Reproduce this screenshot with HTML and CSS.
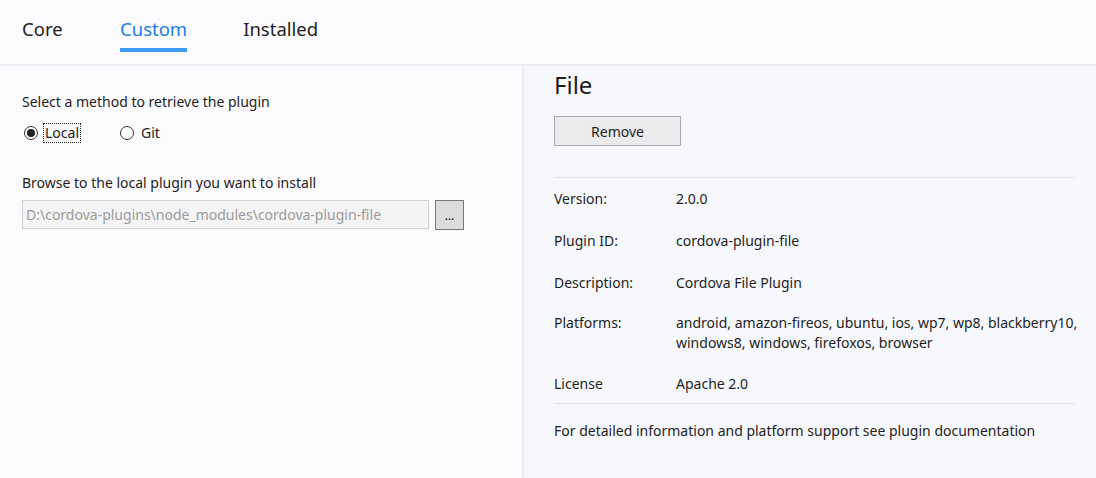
FILE: index.html
```html
<!DOCTYPE html>
<html>
<head>
<meta charset="utf-8">
<link rel="stylesheet" href="styles.css">
</head>
<body>
<div class="app">
  <nav class="tabs">
    <div class="tab t-core">Core</div>
    <div class="tab t-custom active">Custom</div>
    <div class="tab">Installed</div>
  </nav>
  <div class="main">
    <section class="left">
      <div class="label">Select a method to retrieve the plugin</div>
      <div class="radios">
        <label class="radio r-local"><span class="dot checked"></span><span class="rtext focus">Local</span></label>
        <label class="radio"><span class="dot"></span><span class="rtext">Git</span></label>
      </div>
      <div class="label browse">Browse to the local plugin you want to install</div>
      <div class="pathrow">
        <div class="path">D:\cordova-plugins\node_modules\cordova-plugin-file</div>
        <button class="dots">...</button>
      </div>
    </section>
    <section class="right">
      <h1 class="title">File</h1>
      <button class="remove">Remove</button>
      <div class="details">
        <div class="row"><div class="k">Version:</div><div class="v">2.0.0</div></div>
        <div class="row"><div class="k">Plugin ID:</div><div class="v">cordova-plugin-file</div></div>
        <div class="row"><div class="k">Description:</div><div class="v">Cordova File Plugin</div></div>
        <div class="row"><div class="k">Platforms:</div><div class="v">android, amazon-fireos, ubuntu, ios, wp7, wp8, blackberry10, windows8, windows, firefoxos, browser</div></div>
        <div class="row"><div class="k">License</div><div class="v">Apache 2.0</div></div>
      </div>
      <div class="foot">For detailed information and platform support see plugin documentation</div>
    </section>
  </div>
</div>
</body>
</html>
```
FILE: styles.css
```css
* { box-sizing: border-box; }
html, body { margin: 0; height: 100%; }
body {
  font-family: "Noto Sans", "Open Sans", sans-serif;
  font-size: 14px;
  color: #1e1e1e;
  background: #fbfbfd;
}
.app { display: flex; flex-direction: column; height: 478px; }
.tabs {
  height: 66px;
  display: flex;
  padding-left: 22px;
  border-bottom: 2px solid #ececf0;
  background: #fbfbfd;
}
.tab {
  font-size: 18.5px;
  padding-top: 16px;
  height: 52px;
  color: #1e1e1e;
  white-space: nowrap;
}
.t-core { width: 98px; }
.t-custom { margin-right: 56px; }
.tab.active {
  color: #1a7ee0;
  border-bottom: 4px solid #3c9af8;
}
.main { flex: 1; display: flex; }
.left {
  width: 524px;
  border-right: 2px solid #ececf0;
  padding: 26px 22px 0;
  background: #fbfbfd;
}
.label { line-height: 20px; }
.radios { display: flex; margin-top: 11px; height: 20px; align-items: center; }
.radio { display: flex; align-items: center; }
.r-local { width: 96px; }
.dot {
  width: 14px; height: 14px; border-radius: 50%;
  border: 1px solid #333; background: #fff; margin: 0 5px 0 2px;
  position: relative;
}
.dot.checked::after {
  content: ""; position: absolute; left: 2px; top: 2px;
  width: 8px; height: 8px; border-radius: 50%; background: #222;
}
.rtext { padding: 0 1px; border: 1px dotted transparent; line-height: 18px; }
.rtext.focus { border-color: #222; }
.browse { margin-top: 30px; }
.pathrow { display: flex; margin-top: 7px; align-items: flex-start; }
.path {
  width: 407px; height: 29px; line-height: 27px;
  border: 1px solid #cfcfcf; background: #f4f4f4; color: #9a9a9a;
  padding-left: 3px; white-space: nowrap; overflow: hidden;
}
.dots {
  margin-left: 6px; width: 29px; height: 30px;
  border: 1px solid #777; background: #dcdcdc; font: inherit; font-size: 12px; padding: 0;
}
.right {
  flex: 1;
  background: #f7f8fc;
  padding: 3px 21px 0 30px;
}
.title { font-size: 24px; font-weight: normal; margin: 0; line-height: 32px; }
.remove {
  display: block; margin-top: 15px;
  width: 127px; height: 30px;
  border: 1px solid #acacac; background: #ebebee; font: inherit; color: #1e1e1e;
}
.details {
  margin-top: 31px;
  border-top: 1px solid #e5e5ea;
  border-bottom: 1px solid #e5e5ea;
  padding: 11px 0 9px;
}
.row { display: flex; line-height: 20px; margin-bottom: 22px; }
.row:nth-child(3) { margin-bottom: 20px; }
.row:nth-child(4) { margin-bottom: 21px; }
.row:last-child { margin-bottom: 0; }
.k { width: 122px; flex: none; }
.v { flex: 1; margin-right: -8px; }
.foot { margin-top: 17px; line-height: 20px; }
```
